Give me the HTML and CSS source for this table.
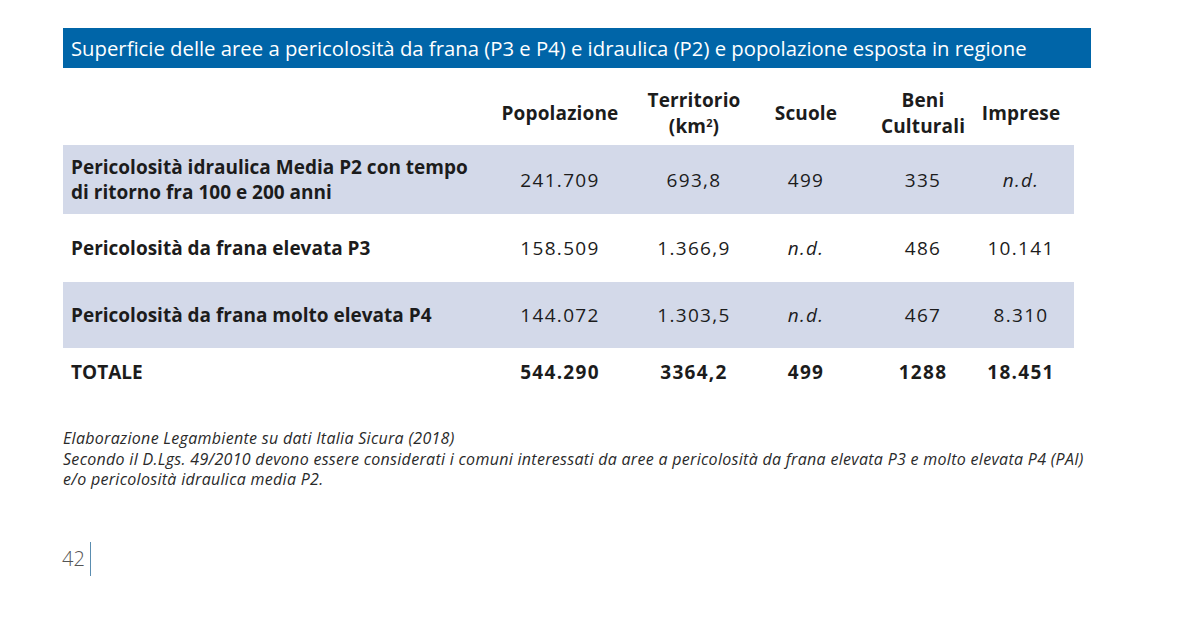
FILE: index.html
```html
<!DOCTYPE html>
<html lang="it">
<head>
<meta charset="utf-8">
<title>Superficie delle aree a pericolosità</title>
<link rel="stylesheet" href="styles.css">
</head>
<body>
<div class="page">
  <div class="title-bar">Superficie delle aree a pericolosità da frana (P3 e P4) e idraulica (P2) e popolazione esposta in regione</div>
  <div class="table">
    <div class="row head">
      <div class="cell label"></div>
      <div class="cell num"><span>Popolazione</span></div>
      <div class="cell num"><span>Territorio<br>(km<sup>2</sup>)</span></div>
      <div class="cell num"><span>Scuole</span></div>
      <div class="cell num"><span>Beni<br>Culturali</span></div>
      <div class="cell num"><span>Imprese</span></div>
    </div>
    <div class="row shaded r1">
      <div class="cell label"><span>Pericolosità idraulica Media P2 con tempo<br>di ritorno fra 100 e 200 anni</span></div>
      <div class="cell num"><span>241.709</span></div>
      <div class="cell num"><span>693,8</span></div>
      <div class="cell num"><span>499</span></div>
      <div class="cell num"><span>335</span></div>
      <div class="cell num"><span class="nd">n.d.</span></div>
    </div>
    <div class="row r2">
      <div class="cell label"><span>Pericolosità da frana elevata P3</span></div>
      <div class="cell num"><span>158.509</span></div>
      <div class="cell num"><span>1.366,9</span></div>
      <div class="cell num"><span class="nd">n.d.</span></div>
      <div class="cell num"><span>486</span></div>
      <div class="cell num"><span>10.141</span></div>
    </div>
    <div class="row shaded r3">
      <div class="cell label"><span>Pericolosità da frana molto elevata P4</span></div>
      <div class="cell num"><span>144.072</span></div>
      <div class="cell num"><span>1.303,5</span></div>
      <div class="cell num"><span class="nd">n.d.</span></div>
      <div class="cell num"><span>467</span></div>
      <div class="cell num"><span>8.310</span></div>
    </div>
    <div class="row total">
      <div class="cell label"><span>TOTALE</span></div>
      <div class="cell num"><span>544.290</span></div>
      <div class="cell num"><span>3364,2</span></div>
      <div class="cell num"><span>499</span></div>
      <div class="cell num"><span>1288</span></div>
      <div class="cell num"><span>18.451</span></div>
    </div>
  </div>
  <div class="notes">
    <p>Elaborazione Legambiente su dati Italia Sicura (2018)</p>
    <p>Secondo il D.Lgs. 49/2010 devono essere considerati i comuni interessati da aree a pericolosità da frana elevata P3 e molto elevata P4 (PAI)</p>
    <p>e/o pericolosità idraulica media P2.</p>
  </div>
  <div class="folio"><span class="folio-num">42</span><span class="folio-line"></span></div>
</div>
</body>
</html>
```
FILE: styles.css
```css
html, body {
  margin: 0;
  padding: 0;
  background: #ffffff;
}
body {
  font-family: "Open Sans", Lato, sans-serif;
  color: #1c1c1c;
}
.page {
  width: 1197px;
  height: 618px;
  padding: 28px 0 0 63px;
  box-sizing: border-box;
}
.title-bar {
  width: 1028px;
  height: 40px;
  box-sizing: border-box;
  background: #0065a8;
  color: #ffffff;
  font-size: 20.3px;
  line-height: 40px;
  padding-left: 8px;
  white-space: nowrap;
}
.table {
  width: 1011px;
  margin-top: 12px;
  display: flex;
  flex-direction: column;
}
.row {
  display: grid;
  grid-template-columns: 403px 188px 80px 144px 90px 106px;
  align-items: center;
}
.head { height: 65px; }
.r1 { height: 69px; }
.r2 { height: 68px; }
.r3 { height: 66px; }
.total { height: 48px; }
.shaded { background: #d3d9e9; }
.cell {
  display: flex;
  white-space: nowrap;
}
.label {
  padding-left: 8px;
  font-weight: 700;
  font-size: 19px;
  line-height: 26px;
}
.r1 .label { line-height: 25px; }
.num {
  justify-content: center;
  text-align: center;
  font-size: 19px;
  line-height: 26px;
  letter-spacing: 1.3px;
}
.head .num {
  font-weight: 700;
  font-size: 19px;
  line-height: 26px;
  letter-spacing: 0.15px;
}
.head sup {
  font-size: 11px;
  line-height: 0;
  vertical-align: 6px;
}
.total .num, .total .label { font-weight: 700; }
.nd { font-style: italic; }
.notes {
  margin-top: 32px;
  font-style: italic;
  font-size: 16px;
  letter-spacing: 0.3px;
  line-height: 20.5px;
  color: #2a2a2a;
}
.notes p { margin: 0; }
.folio {
  margin-top: 52px;
  display: flex;
  align-items: center;
  height: 34px;
}
.folio-num {
  font-size: 20px;
  font-weight: 300;
  color: #555555;
  margin-left: -1px;
}
.folio-line {
  width: 1.5px;
  height: 34px;
  background: #5a8db0;
  margin-left: 5px;
}
```
